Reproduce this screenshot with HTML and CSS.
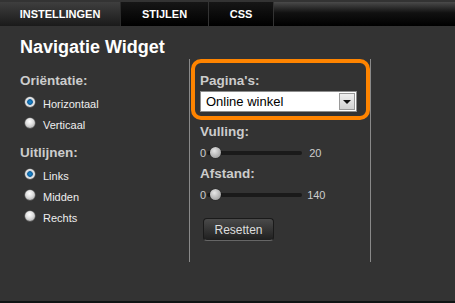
FILE: index.html
```html
<!DOCTYPE html>
<html lang="nl">
<head>
    <meta charset="UTF-8">
    <title>Navigatie Widget</title>
    <link rel="stylesheet" href="styles.css">
</head>
<body>
    <div class="tabs">
        <div class="tab active">INSTELLINGEN</div>
        <div class="tab tab-stijlen">STIJLEN</div>
        <div class="tab tab-css">CSS</div>
        <div class="tab-fill"></div>
    </div>

    <div class="panel">
        <h1>Navigatie Widget</h1>

        <div class="columns">
            <div class="col-left">
                <h2>Oriëntatie:</h2>
                <div class="radio-row"><span class="radio checked"></span>Horizontaal</div>
                <div class="radio-row"><span class="radio"></span>Verticaal</div>

                <h2 class="spaced">Uitlijnen:</h2>
                <div class="radio-row"><span class="radio checked"></span>Links</div>
                <div class="radio-row"><span class="radio"></span>Midden</div>
                <div class="radio-row"><span class="radio"></span>Rechts</div>
            </div>

            <div class="col-right">
                <div class="highlight">
                    <h2>Pagina's:</h2>
                    <div class="select">
                        <span class="select-value">Online winkel</span>
                        <span class="select-arrow"></span>
                    </div>
                </div>

                <h2 class="field-label">Vulling:</h2>
                <div class="slider">
                    <span class="slider-min">0</span>
                    <span class="slider-track"><span class="slider-thumb"></span></span>
                    <span class="slider-max">20</span>
                </div>

                <h2 class="field-label">Afstand:</h2>
                <div class="slider">
                    <span class="slider-min">0</span>
                    <span class="slider-track"><span class="slider-thumb"></span></span>
                    <span class="slider-max wide">140</span>
                </div>

                <button class="btn">Resetten</button>
            </div>
        </div>
    </div>

    <div class="bottom-strip"></div>
</body>
</html>
```

FILE: styles.css
```css
* {
    margin: 0;
    padding: 0;
    box-sizing: border-box;
}

body {
    font-family: 'Liberation Sans', Arial, sans-serif;
    background: #333;
    width: 455px;
    height: 303px;
    overflow: hidden;
    display: flex;
    flex-direction: column;
}

/* tab bar */
.tabs {
    margin-top: 2px;
    height: 24px;
    display: flex;
}

.tab {
    height: 24px;
    line-height: 25px;
    text-align: center;
    color: #fff;
    font-size: 11px;
    font-weight: bold;
    background: linear-gradient(#161616, #000);
    border-right: 1px solid #333;
}

.tab.active {
    width: 121px;
    background: linear-gradient(#3e3e3e, #1a1a1a);
    border-right: 1px solid #2a2a2a;
}

.tab-stijlen { width: 88px; }
.tab-css { width: 65px; }

.tab-fill {
    flex: 1;
    background: linear-gradient(#4a4a4a 0%, #111 45%, #000 100%);
}

/* panel */
.panel {
    flex: 1;
}

h1 {
    font-size: 18px;
    line-height: 20px;
    color: #fff;
    margin: 11px 0 2px 20px;
}

h2 {
    font-size: 13.5px;
    line-height: 16px;
    color: #ccc;
}

.columns {
    display: flex;
    height: 203px;
}

.col-left {
    width: 189px;
    padding: 14px 0 0 20px;
}

.col-left h2 {
    margin-bottom: 4px;
}

.col-left h2.spaced {
    margin-top: 10px;
}

.radio-row {
    height: 21px;
    display: flex;
    align-items: center;
    padding-left: 5px;
    font-size: 11px;
    color: #eee;
}

.radio {
    width: 10px;
    height: 10px;
    border-radius: 50%;
    margin: -3px 8px 0 0;
    background: radial-gradient(circle at 45% 35%, #fff 0%, #ddd 45%, #9a9a9a 100%);
    box-shadow: 0 0 0 0.5px #777;
}

.radio.checked {
    background: radial-gradient(circle, #1b8fd8 0%, #0f5f9c 35%, #cfd6dc 45%, #e8e8e8 65%, #a0a0a0 100%);
}

/* right column with the highlighted field */
.col-right {
    width: 182px;
    border-left: 1px solid #8a8a8a;
    border-right: 1px solid #8a8a8a;
}

.highlight {
    margin-left: 1px;
    border: 4px solid #ff8400;
    border-radius: 10px;
    padding: 10px 0 4px 5px;
    background: #333;
}

.select {
    margin-top: 2px;
    width: 157px;
    height: 21px;
    background: #fff;
    border: 1px solid #8c8c8c;
    display: flex;
    align-items: center;
    justify-content: space-between;
    padding: 0 1px 0 5px;
}

.select-value {
    font-size: 13px;
    color: #000;
}

.select-arrow {
    width: 16px;
    height: 17px;
    background: linear-gradient(#f0f0f0, #d2d2d2);
    border: 1px solid #999;
    display: flex;
    align-items: center;
    justify-content: center;
}

.select-arrow::after {
    content: '';
    border-left: 4px solid transparent;
    border-right: 4px solid transparent;
    border-top: 4px solid #111;
}

.field-label {
    margin: 4px 0 0 10px;
}

.slider {
    margin: 6px 0 7px 10px;
    height: 13px;
    display: flex;
    align-items: center;
    font-size: 11px;
    color: #ccc;
}

.slider-track {
    position: relative;
    width: 95px;
    height: 4px;
    margin-left: 1px;
    background: #1a1a1a;
    border-radius: 2px;
}

.slider-thumb {
    position: absolute;
    left: 3px;
    top: -4px;
    width: 11px;
    height: 11px;
    border-radius: 50%;
    background: radial-gradient(circle at 40% 35%, #e6e6e6, #a8a8a8 70%, #7a7a7a);
    box-shadow: 0 0 1px #000;
}

.slider-max {
    margin-left: 7px;
}

.slider-max.wide {
    margin-left: 5px;
}

.btn {
    margin: 10px 0 0 13px;
    width: 71px;
    height: 23px;
    font-family: 'Liberation Sans', Arial, sans-serif;
    font-size: 12px;
    color: #ddd;
    background: linear-gradient(#4a4a4a, #1f1f1f);
    border: 1px solid #1a1a1a;
    border-bottom-color: #666;
    border-radius: 4px;
}

.bottom-strip {
    height: 2px;
    background: #0f1414;
}
```
